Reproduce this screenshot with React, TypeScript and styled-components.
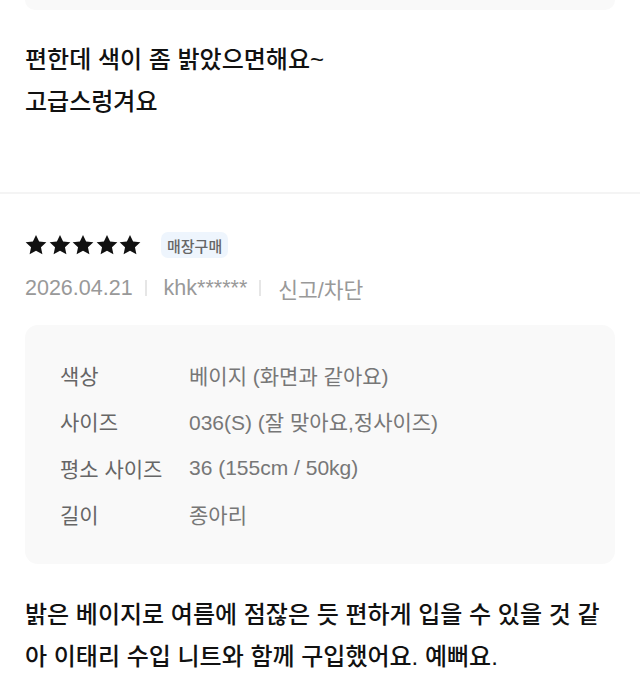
import React from "react";
import styled, { createGlobalStyle } from "styled-components";

const GlobalStyle = createGlobalStyle`
  html, body {
    margin: 0;
    padding: 0;
    background: #fff;
  }
  body {
    font-family: "Liberation Sans", "Noto Sans CJK KR", sans-serif;
    color: #111;
  }
`;

const Page = styled.div`
  width: 640px;
  overflow: hidden;
`;

const Section = styled.section<{ $top?: number; $bottom?: number }>`
  padding: ${(p) => p.$top ?? 0}px 25px ${(p) => p.$bottom ?? 0}px 25px;
`;

const PrevBoxEnd = styled.div`
  height: 10px;
  background: #f9f9f9;
  border-radius: 0 0 13px 13px;
`;

const Comment = styled.p<{ $mt: number }>`
  margin: ${(p) => p.$mt}px 0 0;
  font-size: 24px;
  line-height: 42px;
  font-weight: 500;
  color: #111;
  word-break: break-all;
`;

const Divider = styled.hr`
  margin: 0;
  border: none;
  height: 2px;
  background: #f4f4f4;
`;

const RatingRow = styled.div`
  display: flex;
  align-items: center;
  gap: 20px;
  height: 26px;
`;

const Stars = styled.div`
  display: flex;
  gap: 1.5px;
`;

const Badge = styled.span`
  display: inline-flex;
  align-items: center;
  height: 26px;
  padding: 0 6px;
  border-radius: 7px;
  background: #eef5fd;
  color: #666;
  font-size: 15px;
  font-weight: 500;
`;

const Meta = styled.div`
  display: flex;
  align-items: center;
  margin-top: 17px;
  height: 26px;
  font-size: 21.5px;
  color: #999;
`;

const Sep = styled.span`
  width: 2px;
  height: 16px;
  margin: 0 17px 0 12px;
  background: #e6e6e6;
`;

const InfoBox = styled.div`
  margin-top: 24px;
  padding: 27px 35px;
  background: #f9f9f9;
  border-radius: 13px;
  display: grid;
  grid-template-columns: 129px 1fr;
  grid-auto-rows: 46.3px;
  align-items: center;
  font-size: 21px;
`;

const Label = styled.span`
  color: #666;
`;

const Value = styled.span`
  color: #777;
`;

const Star = () => (
  <svg width="22" height="22" viewBox="0 0 24 24">
    <path
      d="M12 1l3.4 7.1 7.9.9-5.9 5.4 1.6 7.8L12 18.3l-7 3.9 1.6-7.8L.7 9l7.9-.9z"
      fill="#111"
    />
  </svg>
);

const options = [
  ["색상", "베이지 (화면과 같아요)"],
  ["사이즈", "036(S) (잘 맞아요,정사이즈)"],
  ["평소 사이즈", "36 (155cm / 50kg)"],
  ["길이", "종아리"],
];

export default function App() {
  return (
    <Page>
      <GlobalStyle />
      <Section $bottom={69}>
        <PrevBoxEnd />
        <Comment $mt={29}>
          편한데 색이 좀 밝았으면해요~
          <br />
          고급스렁겨요
        </Comment>
      </Section>
      <Divider />
      <Section $top={38} $bottom={40}>
        <RatingRow>
          <Stars>
            {[0, 1, 2, 3, 4].map((i) => (
              <Star key={i} />
            ))}
          </Stars>
          <Badge>매장구매</Badge>
        </RatingRow>
        <Meta>
          <span>2026.04.21</span>
          <Sep />
          <span>khk******</span>
          <Sep />
          <span>신고/차단</span>
        </Meta>
        <InfoBox>
          {options.map(([k, v]) => (
            <React.Fragment key={k}>
              <Label>{k}</Label>
              <Value>{v}</Value>
            </React.Fragment>
          ))}
        </InfoBox>
        <Comment $mt={30}>
          밝은 베이지로 여름에 점잖은 듯 편하게 입을 수 있을 것 같아 이태리 수입 니트와 함께 구입했어요. 예뻐요.
        </Comment>
      </Section>
    </Page>
  );
}
